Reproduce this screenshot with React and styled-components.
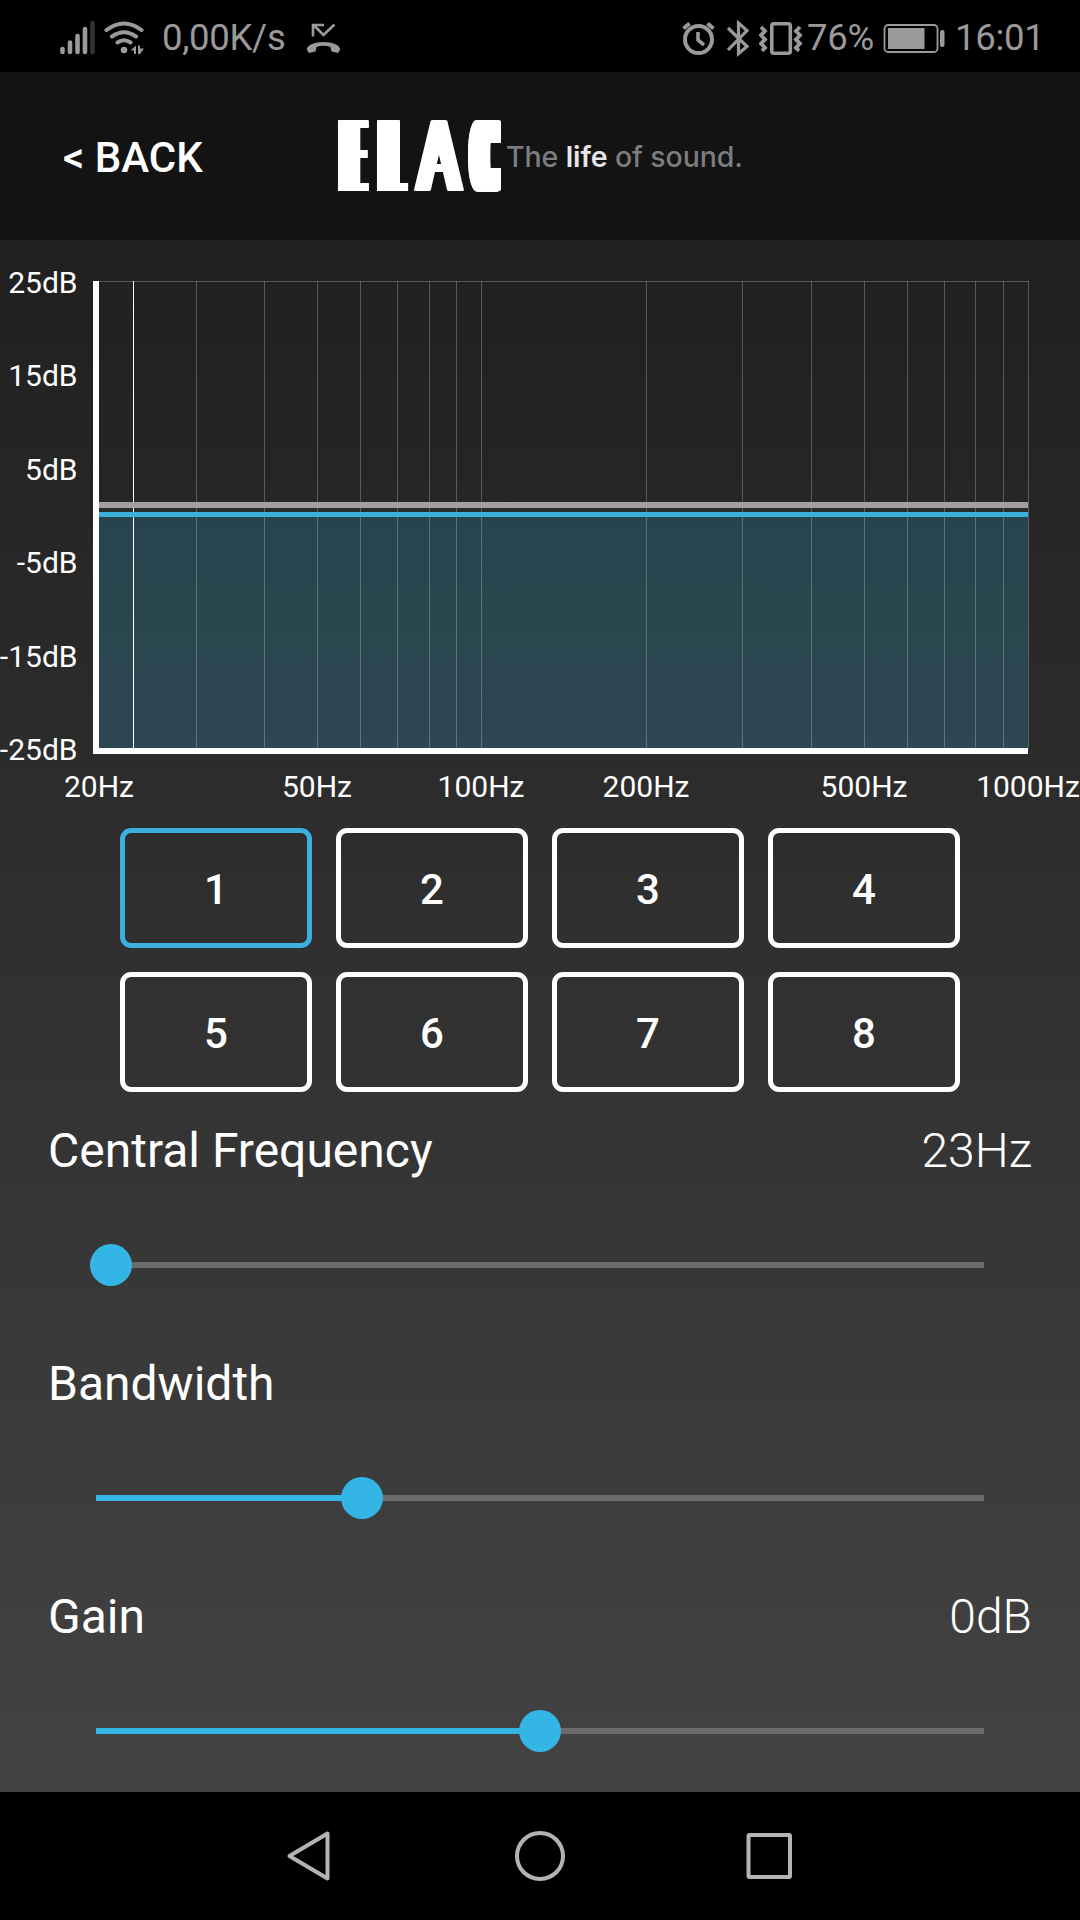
import React, { useState } from "react";
import styled, { createGlobalStyle } from "styled-components";

const GlobalStyle = createGlobalStyle`
  * {
    box-sizing: border-box;
  }
  body {
    margin: 0;
    background: #000;
    font-family: Roboto, "Noto Sans", sans-serif;
    color: #fff;
  }
`;

const Screen = styled.div`
  width: 1080px;
  height: 1920px;
  display: flex;
  flex-direction: column;
  overflow: hidden;
`;

const StatusBar = styled.div`
  height: 72px;
  display: flex;
  align-items: center;
  padding: 3px 40px 0 60px;
  background: #000;
  color: #9a9a9a;
  font-size: 36.5px;
  line-height: 44px;
`;

const StatusText = styled.span`
  margin-left: ${(p) => p.$left}px;
  width: ${(p) => p.$width}px;
  letter-spacing: -0.3px;
  white-space: nowrap;
`;

const StatusIcon = styled.svg`
  display: block;
  flex: none;
  margin-left: ${(p) => p.$left || 0}px;
`;

const Header = styled.header`
  height: 168px;
  display: flex;
  align-items: center;
  padding-left: 62px;
  background: #131313;
`;

const BackButton = styled.button`
  width: 276px;
  padding: 4px 0 0 1px;
  border: 0;
  background: none;
  color: #fff;
  font: 500 42px/48px Roboto, sans-serif;
  text-align: left;
`;

const Brand = styled.div`
  display: flex;
  align-items: center;
  height: 71px;
`;

const Wordmark = styled.div`
  display: flex;
  width: 163px;
  height: 71px;
`;

// every letter is squeezed, then thickened sideways so only the stems get heavy
const smear = (n) =>
  Array.from({ length: n }, (_, i) => `${i + 1}px 0 0 #fff`).join(",");

const Letter = styled.span`
  display: block;
  width: ${(p) => p.$width}px;
  height: 71px;
  margin-right: ${(p) => p.$gap}px;
  font-size: 100px;
  line-height: 71px;
  font-weight: 400;
  transform-origin: 0 0;
  transform: translateX(${(p) => p.$shift}px) scaleX(${(p) => p.$scale});
  clip-path: inset(0 ${(p) => p.$clip || -200}px 0 0);
  text-shadow: ${(p) => smear(p.$smear)};
`;

const Tagline = styled.div`
  margin: 1px 0 0 5px;
  color: #7b7d80;
  font: 500 28.5px/40px Inter, sans-serif;
  letter-spacing: -0.1px;
  white-space: nowrap;

  b {
    color: #e6e6e6;
    font-weight: 600;
  }
`;

const Main = styled.main`
  height: 1552px;
  background: linear-gradient(#202020, #434343);
`;

const Chart = styled.svg`
  display: block;
  font-size: 30px;
  fill: #fff;
`;

const Presets = styled.div`
  display: grid;
  grid-template-columns: repeat(4, 192px);
  grid-auto-rows: 120px;
  gap: 24px;
  padding: 0 120px;
`;

const PresetButton = styled.button`
  padding: 4px 0 0;
  border: 5px solid ${(p) => (p.$active ? "#3cb0dc" : "#fff")};
  border-radius: 11px;
  background: none;
  color: #fff;
  font: 500 42px/48px Roboto, sans-serif;
`;

const Controls = styled.div`
  padding-top: 31px;
`;

const Control = styled.div`
  height: 233px;
`;

const ControlHead = styled.div`
  display: flex;
  justify-content: space-between;
  padding: 0 48px;
  font-size: 48px;
  line-height: 56px;
`;

const Value = styled.span`
  font-weight: 300;
`;

const Track = styled.div`
  position: relative;
  height: 6px;
  margin: 83px 96px 0;
  background: #6b6b6b;
`;

const Fill = styled.div`
  height: 6px;
  background: #33b5e5;
`;

const Thumb = styled.div`
  position: absolute;
  top: -18px;
  width: 42px;
  height: 42px;
  margin-left: -21px;
  border-radius: 50%;
  background: #33b5e5;
`;

const NavBar = styled.nav`
  height: 128px;
  display: flex;
  justify-content: center;
  background: #000;
`;

const LEFT = 99;
const RIGHT = 1028;
const freqX = (f) =>
  Math.round(LEFT + 0.3 + ((RIGHT - LEFT) * Math.log(f / 20)) / Math.log(50));

const gridFreqs = [
  30, 40, 50, 60, 70, 80, 90, 100, 200, 300, 400, 500, 600, 700, 800, 900, 1000,
];
const labelFreqs = [20, 50, 100, 200, 500, 1000];
const levels = [25, 15, 5, -5, -15, -25];

const EqChart = () => (
  <Chart width="1080" height="588" viewBox="0 0 1080 588">
    <rect x="99" y="268" width="929" height="243" fill="#33b5e5" opacity="0.06" />
    <rect x="99" y="277" width="929" height="234" fill="#33b5e5" opacity="0.16" />
    {gridFreqs.map((f) => (
      <rect key={f} x={freqX(f)} y="41" width="1" height="467" opacity="0.24" />
    ))}
    <rect x="99" y="41" width="930" height="1" opacity="0.24" />
    <rect x="133" y="41" width="1" height="467" />
    <rect x="99" y="262" width="929" height="6" fill="#a39fa0" />
    <rect x="99" y="272" width="929" height="5" fill="#3cb0dc" />
    <path d="M93 41h6v467h929v6H93z" />
    {levels.map((db, i) => (
      <text key={db} x="77.5" y={53 + i * 93.4} textAnchor="end">
        {db}dB
      </text>
    ))}
    {labelFreqs.map((f) => (
      <text key={f} x={freqX(f)} y="557" textAnchor="middle">
        {f}Hz
      </text>
    ))}
  </Chart>
);

const Slider = ({ label, value, position }) => (
  <Control>
    <ControlHead>
      <span>{label}</span>
      {value && <Value>{value}</Value>}
    </ControlHead>
    <Track>
      <Fill style={{ width: `${position}%` }} />
      <Thumb style={{ left: `${position}%` }} />
    </Track>
  </Control>
);

const StatusIcons = () => (
  <StatusBar>
    <StatusIcon width="36" height="40" viewBox="60 16 36 40" stroke="#9a9a9a" strokeWidth="4.6" strokeLinecap="round">
      <path d="M62.5 47v3M70 40.500v9.500M77.500 34v16M85 27v23" />
      <path d="M92.500 21v29" stroke="#333" />
    </StatusIcon>
    <StatusIcon $left={8} width="42" height="40" viewBox="104 16 42 40" fill="none" stroke="#9a9a9a" strokeWidth="4" strokeLinecap="round">
      <path d="M106.500 28Q124 15 141.500 28M112 34.500Q124 26 136 34.500M117.500 40.500Q124 36 130.500 40.500" />
      <circle cx="124" cy="48" r="3.300" fill="#9a9a9a" stroke="none" />
      <path d="M136 43.500v8.500h-2v-3.500h-3.500zM138 43.500v8.500h2l4-5.500h-4v-3z" fill="#9a9a9a" stroke="none" />
    </StatusIcon>
    <StatusText $left={16} $width={142}>
      0,00K/s
    </StatusText>
    <StatusIcon $left={2} width="36" height="40" viewBox="306 16 36 40" fill="none" stroke="#9a9a9a" strokeWidth="2.600">
      <path d="M334.500 22.500L323.500 33 313.500 23M313 34.500V23h11" />
      <path d="M307 48C306 43 315 40 323.500 40S341 43 340 48L338 51 331.500 49.500 330.500 45Q323.500 42.500 316.500 45L315.500 49.500 309 51z" fill="#9a9a9a" stroke="none" />
    </StatusIcon>
    <StatusIcon $left={340} width="34" height="40" viewBox="682 16 34 40" fill="none" stroke="#9a9a9a" strokeWidth="4">
      <circle cx="698.500" cy="37.500" r="13.500" />
      <path d="M698 30v8l6 5" strokeWidth="3.600" />
      <path d="M683.500 26.500l6-5M713.500 26.500l-6-5" />
    </StatusIcon>
    <StatusIcon $left={10} width="24" height="40" viewBox="726 16 24 40" fill="none" stroke="#9a9a9a" strokeWidth="3.200">
      <path d="M728 26L747 44.500 738.500 51.500V21L747 28.500 728 48" />
    </StatusIcon>
    <StatusIcon $left={9} width="44" height="40" viewBox="759 16 44 40" fill="none" stroke="#9a9a9a" strokeWidth="3.600">
      <rect x="771.800" y="21.800" width="18.500" height="29.500" rx="2" />
      <path d="M761 25l4 4-4 4.200 4 4.200-4 4.200 4 4.200-3 3M800 25l-4 4 4 4.200-4 4.200 4 4.200-4 4.200 3 3" strokeWidth="3.800" />
    </StatusIcon>
    <StatusText $left={4} $width={73}>
      76%
    </StatusText>
    <StatusIcon $left={3} width="64" height="40" viewBox="883 16 64 40">
      <rect x="884.500" y="23" width="53" height="27" rx="3.500" fill="none" stroke="#9a9a9a" strokeWidth="1.800" />
      <rect x="888" y="26" width="36.500" height="21" fill="#9a9a9a" />
      <rect x="940" y="28" width="4.500" height="17" rx="2" fill="#9a9a9a" />
    </StatusIcon>
    <StatusText $left={8} $width={85}>
      16:01
    </StatusText>
  </StatusBar>
);

const App = () => {
  const [preset, setPreset] = useState(1);

  return (
    <Screen>
      <GlobalStyle />
      <StatusIcons />
      <Header>
        <BackButton>&lt; BACK</BackButton>
        <Brand>
          <Wordmark>
            <Letter $width={32} $gap={7} $shift={-2} $scale={0.24} $smear={83}>E</Letter>
            <Letter $width={32} $gap={5} $shift={-2} $scale={0.24} $smear={86}>L</Letter>
            <Letter $width={50} $gap={4} $shift={-1} $scale={0.63} $smear={17}>A</Letter>
            <Letter $width={33} $gap={0} $shift={-2} $scale={0.35} $smear={54} $clip={-67}>C</Letter>
          </Wordmark>
          <Tagline>
            The <b>life</b> of sound.
          </Tagline>
        </Brand>
      </Header>
      <Main>
        <EqChart />
        <Presets>
          {[1, 2, 3, 4, 5, 6, 7, 8].map((n) => (
            <PresetButton key={n} $active={n === preset} onClick={() => setPreset(n)}>
              {n}
            </PresetButton>
          ))}
        </Presets>
        <Controls>
          <Slider label="Central Frequency" value="23Hz" position={1.7} />
          <Slider label="Bandwidth" position={29.9} />
          <Slider label="Gain" value="0dB" position={50} />
        </Controls>
      </Main>
      <NavBar>
        <svg width="520" height="128" viewBox="280 0 520 128" fill="none" stroke="#b3b3b3" strokeWidth="4" strokeLinejoin="round">
          <path d="M327.500 41.500v45L289.500 64z" />
          <circle cx="540" cy="64" r="23" />
          <rect x="748.500" y="43" width="41.500" height="42" rx="1" />
        </svg>
      </NavBar>
    </Screen>
  );
};

export default App;
